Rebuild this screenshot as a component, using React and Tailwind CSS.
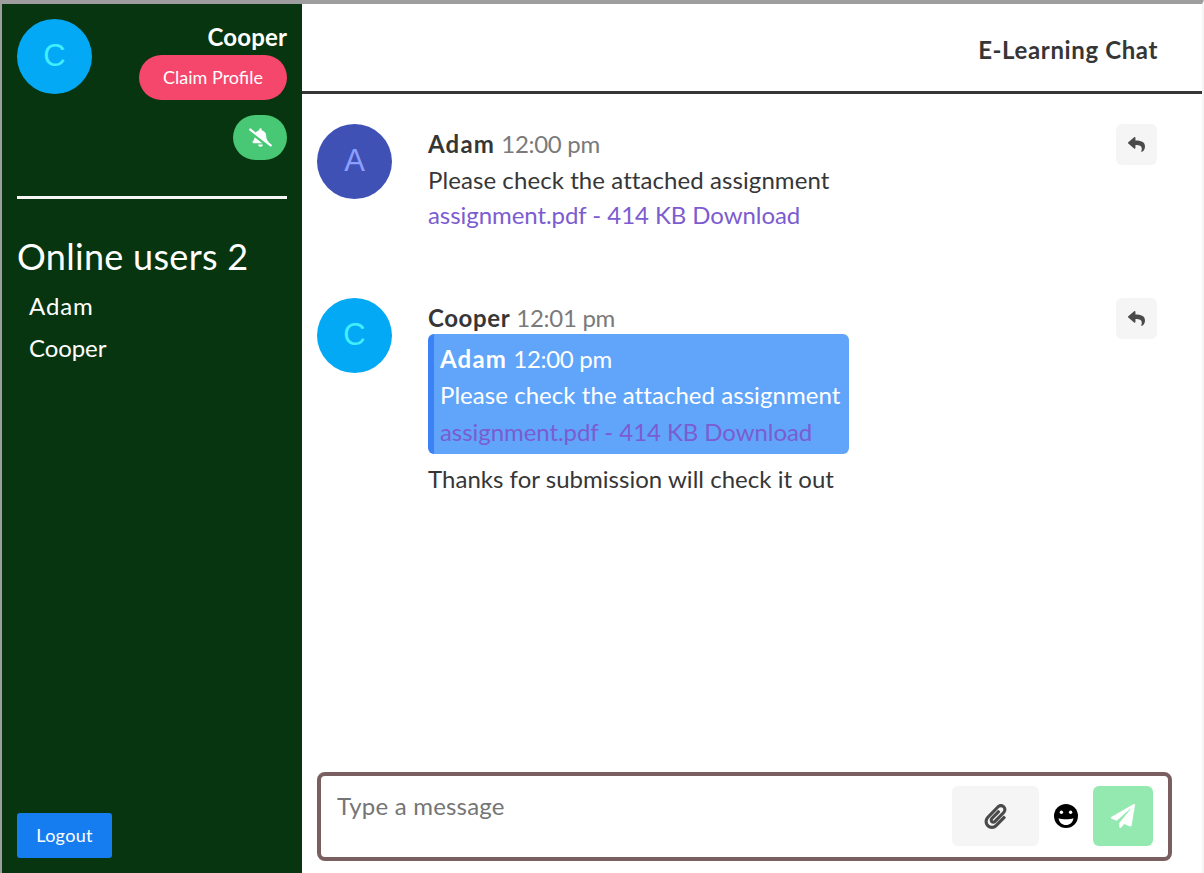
import React from "react";
import { FaBellSlash, FaPaperclip, FaPaperPlane, FaReply } from "react-icons/fa";

const font = "font-['Lato','Noto_Sans',sans-serif]";

function Avatar({ letter, bg, fg }) {
  return (
    <div className={`w-[75px] h-[75px] shrink-0 rounded-full flex items-center justify-center text-[31px] font-['Liberation_Sans',sans-serif] ${bg} ${fg}`}>
      {letter}
    </div>
  );
}

function ReplyButton() {
  return (
    <button className="w-[41px] h-[41px] rounded-md bg-[#f5f5f5] flex items-center justify-center text-[#4a4a4a] text-[17px]">
      <FaReply />
    </button>
  );
}

function GrinIcon() {
  return (
    <svg width="24" height="24" viewBox="0 0 24 24" aria-hidden="true">
      <circle cx="12" cy="12" r="12" fill="#000" />
      <circle cx="7.4" cy="8.2" r="1.7" fill="#fff" />
      <circle cx="16.6" cy="8.2" r="1.7" fill="#fff" />
      <path d="M4.6 14.2 C8 15.6 16 15.6 19.4 14.2 C19 18.4 15.8 21 12 21 C8.2 21 5 18.4 4.6 14.2 Z" fill="#fff" />
    </svg>
  );
}

function Attachment({ className }) {
  return <div className={`h-9 leading-[38px] whitespace-nowrap tracking-[-0.06px] ${className}`}>assignment.pdf - 414 KB Download</div>;
}

function Message({ letter, bg, fg, name, nameTracking, time, children, className }) {
  return (
    <div className={`flex ${className}`}>
      <Avatar letter={letter} bg={bg} fg={fg} />
      <div className="ml-9 flex-1 min-w-0">
        <div className="h-9 leading-[40px] text-[#363636] whitespace-nowrap">
          <span className={`font-bold ${nameTracking}`}>{name}</span> <span className="text-[#7a7a7a] tracking-[-0.3px]">{time}</span>
        </div>
        {children}
      </div>
      <ReplyButton />
    </div>
  );
}

export default function App() {
  return (
    <div className={`h-[873px] w-[1204px] overflow-hidden bg-white border-t-4 border-l-2 border-r-2 border-t-[#9e9e9e] border-l-[#9e9e9e] border-r-[#f5f5f5] flex text-[24px] ${font}`}>
      <aside className="w-[300px] shrink-0 bg-[#07350f] text-white px-[15px] pt-[15px] pb-[15px] flex flex-col">
        <div className="flex justify-between">
          <Avatar letter="C" bg="bg-[#03a9f4]" fg="text-[#40eeff]" />
          <div className="flex flex-col items-end">
            <div className="text-[24px] leading-[36px] font-bold tracking-[0.15px]">Cooper</div>
            <button className="h-[45px] w-[148px] rounded-full bg-[#f4476b] text-[18px] text-white">Claim Profile</button>
            <button className="mt-[15px] h-[45px] w-[54px] rounded-full bg-[#48c774] flex items-center justify-center text-[23px] text-white">
              <FaBellSlash />
            </button>
          </div>
        </div>
        <div className="mt-[36px] h-[3px] bg-[#f5f5f5]" />
        <div className="mt-[33px] text-[36px] leading-[48px] tracking-[0.3px]">Online users 2</div>
        <div className="mt-[5px] pl-3 flex flex-col">
          <div className="h-[42px] leading-[42px] tracking-[0.9px]">Adam</div>
          <div className="h-[42px] leading-[42px] tracking-[-0.1px]">Cooper</div>
        </div>
        <button className="mt-auto w-[95px] h-[45px] rounded-[3px] bg-[#167df0] text-[18px] text-white tracking-[0.3px]">Logout</button>
      </aside>
      <main className="flex-1 min-w-0 flex flex-col">
        <header className="h-[90px] shrink-0 border-b-[3px] border-[#363636] flex items-center justify-end pr-[44px] pt-[4px]">
          <h1 className="text-[24px] font-bold text-[#363636] tracking-[0.62px]">E-Learning Chat</h1>
        </header>
        <div className="flex-1 min-h-0 pl-[15px] pr-[45px] pt-[30px] flex flex-col text-[#363636]">
          <Message letter="A" bg="bg-[#3f51b5]" fg="text-[#8c9eff]" name="Adam" nameTracking="tracking-[1.2px]" time="12:00 pm" className="h-[174px]">
            <div className="h-9 leading-[40px] tracking-[0.08px]">Please check the attached assignment</div>
            <Attachment className="text-[#7c5cd0]" />
          </Message>
          <Message letter="C" bg="bg-[#03a9f4]" fg="text-[#40eeff]" name="Cooper" nameTracking="tracking-[0.6px]" time="12:01 pm">
            <div className="w-[421px] h-[120px] rounded-md bg-[#60a5fa] border-l-[6px] border-[#3b82f6] pl-[6px] pt-[7px] text-white">
              <div className="h-[36px] leading-9 whitespace-nowrap">
                <span className="font-bold tracking-[1.2px]">Adam</span> <span className="tracking-[-0.3px]">12:00 pm</span>
              </div>
              <div className="h-9 leading-9 whitespace-nowrap tracking-[0.05px]">Please check the attached assignment</div>
              <Attachment className="text-[#7c5cd0]" />
            </div>
            <div className="mt-[7px] h-9 leading-9 tracking-[0.03px]">Thanks for submission will check it out</div>
          </Message>
        </div>
        <div className="shrink-0 pl-[15px] pr-[30px] pb-[12px]">
          <div className="h-[89px] rounded-lg border-4 border-[#795f5f] flex items-center pl-[16px] pr-[15px] pb-[1px]">
            <span className="flex-1 self-start pt-[12px] leading-9 text-[#757575] tracking-[0.2px]">Type a message</span>
            <button className="w-[87px] h-[60px] rounded-md bg-[#f5f5f5] flex items-center justify-center text-[#4a4a4a] text-[25px]">
              <FaPaperclip />
            </button>
            <span className="w-[54px] flex items-center justify-center"><GrinIcon /></span>
            <button className="w-[60px] h-[60px] rounded-md bg-[#94e9b1] flex items-center justify-center text-white text-[24px]">
              <FaPaperPlane />
            </button>
          </div>
        </div>
      </main>
    </div>
  );
}
